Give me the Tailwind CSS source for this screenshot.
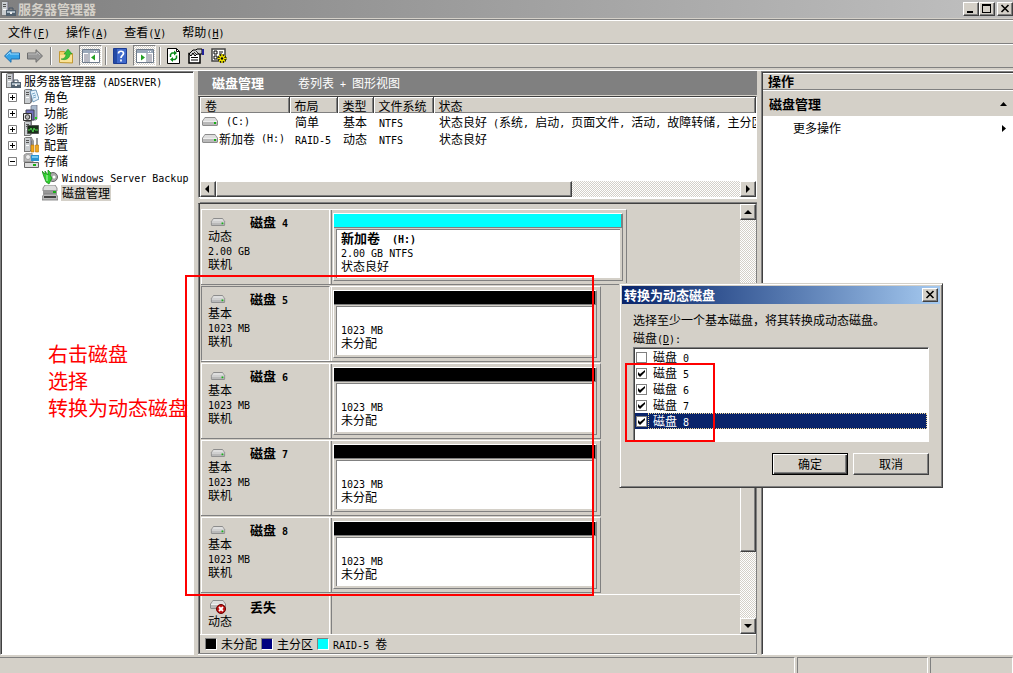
<!DOCTYPE html>
<html lang="zh-CN">
<head>
<meta charset="utf-8">
<title>服务器管理器</title>
<script src="https://cdn.jsdelivr.net/npm/@tailwindcss/browser@4"></script>
</head>
<body class="relative flex h-screen min-h-[673px] flex-col overflow-hidden bg-[#d4d0c8] font-['Noto_Sans_CJK_SC',sans-serif] text-[12px] leading-[16px] text-black [&_span]:font-['DejaVu_Sans_Mono'] [&_span]:text-[10px] [&_span]:leading-none [&_span]:whitespace-pre">
<svg class="hidden" aria-hidden="true">
  <symbol id="disk" viewBox="0 0 16 9"><path d="M3 0h10l3 4v4l-1 1H1L0 8V4z" fill="#8c8c8c"/><path d="M3 1h10l2 3H1z" fill="#dedede"/><path d="M1 4h14v4H1z" fill="#b9b9b9"/><path d="M1 4h14v1H1z" fill="#eee"/><path d="M12 5h2v2h-2z" fill="#18b018"/></symbol>
  <symbol id="tower" viewBox="0 0 16 16"><path d="M1 1l2-1h6v13l-2 2H1z" fill="#777"/><path d="M2 1h5v13H2z" fill="#c9cdd0"/><path d="M3 3h3v1H3zM3 5h3v1H3z" fill="#555"/><path d="M3 8h3v1H3z" fill="#fff"/><path d="M7 1h1v12H7z" fill="#99a"/></symbol>
  <symbol id="server" viewBox="0 0 16 16"><use href="#tower" width="16" height="16"/><path d="M9 9V7h4v2" fill="none" stroke="#456"/><path d="M6 9h10v6H6z" fill="#51616f"/><path d="M7 10h8v2H7z" fill="#a9b8c4"/><path d="M10 11h2v2h-2z" fill="#eee"/></symbol>
  <symbol id="pane" viewBox="0 0 18 14"><path d="M.5 .5h17v13H.5z" fill="#fff" stroke="#6e7b8b"/><path d="M1 1h16v3H1z" fill="#9ba9ba"/><path d="M12 2h1v1h-1zM14 2h1v1h-1z" fill="#fff"/></symbol>
</svg>

<header class="flex h-[18px] shrink-0 items-center justify-between bg-linear-to-r from-[#808080] to-[#c0c0c0]">
  <h1 class="flex items-center gap-[2px] text-[13px] font-bold text-[#d4d0c8]"><svg class="size-4"><use href="#server"/></svg>服务器管理器</h1>
  <div class="flex">
    <button aria-label="最小化" class="h-[14px] w-4 border border-t-white border-l-white border-r-[#404040] border-b-[#404040] bg-[#d4d0c8] shadow-[inset_-1px_-1px_#808080]"><svg viewBox="0 0 14 12" class="h-3 w-[14px]"><path d="M3 8h6v2H3z"/></svg></button>
    <button aria-label="最大化" class="mr-[2px] h-[14px] w-4 border border-t-white border-l-white border-r-[#404040] border-b-[#404040] bg-[#d4d0c8] shadow-[inset_-1px_-1px_#808080]"><svg viewBox="0 0 14 12" class="h-3 w-[14px]"><path d="M2 1h9v9H2zM3 3v6h7V3z" fill-rule="evenodd"/></svg></button>
    <button aria-label="关闭" class="h-[14px] w-4 border border-t-white border-l-white border-r-[#404040] border-b-[#404040] bg-[#d4d0c8] shadow-[inset_-1px_-1px_#808080]"><svg viewBox="0 0 14 12" class="h-3 w-[14px]"><path d="M3.500 2l7 7M10.500 2l-7 7" stroke="#000" stroke-width="1.600"/></svg></button>
  </div>
</header>

<nav class="mt-px flex h-[25px] shrink-0 items-center gap-4 border-t border-b border-[#808080] pl-2 shadow-[inset_0_1px_#fff]">
  <button>文件<span>(<u>F</u>)</span></button><button>操作<span>(<u>A</u>)</span></button><button>查看<span>(<u>V</u>)</span></button><button>帮助<span>(<u>H</u>)</span></button>
</nav>

<div role="toolbar" class="flex h-6 shrink-0 items-center border-b border-[#808080] pl-1 shadow-[inset_0_1px_#fff]">
  <button aria-label="后退"><svg class="block h-[14px] w-4" viewBox="0 0 16 14"><path d="M.5 7L7 .7V4h8.500v6H7v3.300z" fill="#35a3e8" stroke="#1c6cae"/><path d="M2.500 6.500L6 3v2h9" fill="none" stroke="#9bdcff"/></svg></button>
  <button aria-label="前进" class="ml-[7px]"><svg class="block h-[14px] w-4" viewBox="0 0 16 14"><path d="M15.500 7L9 .7V4H.5v6H9v3.300z" fill="#999" stroke="#6c6c6c"/><path d="M1 5h9V3l3 3" fill="none" stroke="#bbb"/></svg></button>
  <div class="ml-[7px] h-[18px] w-[2px] border-l border-[#808080] bg-white"></div>
  <button aria-label="上移" class="ml-[7px]"><svg class="block size-4" viewBox="0 0 16 16"><path d="M.5 14.500v-11h5l1.500 2h6.500V15z" fill="#f2cf6b" stroke="#c39a35"/><path d="M1 7h12v7H1z" fill="#fbe397"/><path d="M2 11c3 0 5-2 5-5H5l4-5 4 5h-2c0 4-4 7-9 5z" fill="#3cc13c" stroke="#168a1d" stroke-width=".5"/></svg></button>
  <button aria-label="显示控制台树" class="ml-1 flex h-[21px] w-[23px] items-center justify-center border border-t-[#808080] border-l-[#808080] border-r-white border-b-white bg-[conic-gradient(#fff_25%,#d4d0c8_0_50%,#fff_0_75%,#d4d0c8_0)] bg-[length:2px_2px]"><svg class="h-[14px] w-[18px]" viewBox="0 0 18 14"><use href="#pane"/><path d="M2 6h4M2 8h4M2 10h4M2 12h4" stroke="#778" /><path d="M7 4v9" stroke="#6e7b8b"/><path d="M13 5.500v6L9 8.500z" fill="#22a022"/></svg></button>
  <div class="ml-[3px] h-[18px] w-[2px] border-l border-[#808080] bg-white"></div>
  <button aria-label="帮助" class="ml-[6px]"><svg class="block h-4 w-[14px]" viewBox="0 0 14 16"><path d="M.5 .5h13v15H.5z" fill="#3f69cb" stroke="#1d3c92"/><path d="M1 1h3v14H1z" fill="#244aa5"/><path d="M5.500 5.500c0-3 5-3 5 0 0 2-2.500 2-2.500 4.500M8 11.500v2" fill="none" stroke="#fff" stroke-width="1.700"/></svg></button>
  <button aria-label="显示操作窗格" class="ml-[6px] flex h-[21px] w-[23px] items-center justify-center border border-t-[#808080] border-l-[#808080] border-r-white border-b-white bg-[conic-gradient(#fff_25%,#d4d0c8_0_50%,#fff_0_75%,#d4d0c8_0)] bg-[length:2px_2px]"><svg class="h-[14px] w-[18px]" viewBox="0 0 18 14"><use href="#pane"/><path d="M12 6h4M12 8h4M12 10h4M12 12h4" stroke="#778"/><path d="M11 4v9" stroke="#6e7b8b"/><path d="M5 5.500v6l4-3z" fill="#22a022"/></svg></button>
  <div class="ml-[3px] h-[18px] w-[2px] border-l border-[#808080] bg-white"></div>
  <button aria-label="刷新" class="ml-[6px]"><svg class="block h-4 w-[13px]" viewBox="0 0 13 16"><path d="M.5 .5h9l3 3v12H.5z" fill="#fff" stroke="#000"/><path d="M9.500 .5v3h3" fill="none" stroke="#000"/><path d="M3.500 9V6.500L5 5h3M9.500 7.500V10L8 11.500H5" fill="none" stroke="#0a8a1a" stroke-width="1.500"/><path d="M7 2.500v5L10 5zM6 9v5L3 11.500z" fill="#0a8a1a"/></svg></button>
  <button aria-label="属性" class="ml-2"><svg class="block h-4 w-[17px]" viewBox="0 0 17 16"><path d="M1 5.500h11v9.500H1z" fill="#fff" stroke="#000" stroke-width="1.500"/><path d="M3 9.500h7M3 12h7" stroke="#000"/><path d="M1 6l4-4h3l1-1h5v5H9L7 8 5 5 3 8z" fill="#ccc" stroke="#000"/><path d="M6 4l3 3M8 3l3 3" stroke="#000" stroke-width=".8"/><path d="M14 1h2v6h-2z" fill="#22229a"/></svg></button>
  <button aria-label="设置" class="ml-[6px]"><svg class="block h-4 w-[17px]" viewBox="0 0 17 16"><path d="M1 1h13v12H1z" fill="#fff" stroke="#444" stroke-width="1.500"/><path d="M3 3h3v3H3zM3 8h3v3H3z" fill="none" stroke="#000"/><path d="M8 4h4M8 6h3" stroke="#000"/><path d="M11 6v9M6.500 10.500h9M8 7.500l6 6M14 7.500l-6 6" stroke="#000" stroke-width="3"/><path d="M11 6v9M6.500 10.500h9M8 7.500l6 6M14 7.500l-6 6" stroke="#eee000" stroke-width="1.600"/><circle cx="11" cy="10.500" r="1.200"/></svg></button>
</div>

<main class="mt-[2px] flex min-h-0 flex-1 gap-1 border-t border-white">
  <aside class="w-[194px] shrink-0 overflow-hidden border border-t-[#808080] border-l-[#808080] border-r-white border-b-white bg-white shadow-[inset_1px_1px_#404040]">
    <ul role="tree" class="pt-px pl-1">
      <li class="flex h-4 items-center gap-[3px]"><svg class="size-4"><use href="#server"/></svg><a href="#">服务器管理器<span> (ADSERVER)</span></a></li>
      <li class="flex h-4 items-center pl-[3px]"><svg class="mr-[6px] size-[9px]" viewBox="0 0 9 9"><path d="M.5 .5h8v8h-8z" fill="#fff" stroke="#808080"/><path d="M2 4.500h5M4.500 2v5" stroke="#000"/></svg><svg class="mr-[5px] size-4" viewBox="0 0 16 16"><use href="#tower"/><path d="M7 2l6-1 3 9-6 3z" fill="#e4f1fb" stroke="#5484a8" stroke-width=".8"/><path d="M9 5l3-1M10 7l3-1M10 9l3-1" stroke="#79a9cb"/></svg><a href="#">角色</a></li>
      <li class="flex h-4 items-center pl-[3px]"><svg class="mr-[6px] size-[9px]" viewBox="0 0 9 9"><path d="M.5 .5h8v8h-8z" fill="#fff" stroke="#808080"/><path d="M2 4.500h5M4.500 2v5" stroke="#000"/></svg><svg class="mr-[5px] size-4" viewBox="0 0 16 16"><path d="M8 1l2-1h4v14l-1 1H8z" fill="#a8b8cc" stroke="#667" stroke-width=".7"/><path d="M3 5h8v10H3z" fill="#7070bc" stroke="#445"/><path d="M.5 8.500h8v7h-8z" fill="#eee" stroke="#333"/><circle cx="4.500" cy="12" r="2.300" fill="#bbb" stroke="#333"/><path d="M12 12h2v2h-2z" fill="#20d020"/></svg><a href="#">功能</a></li>
      <li class="flex h-4 items-center pl-[3px]"><svg class="mr-[6px] size-[9px]" viewBox="0 0 9 9"><path d="M.5 .5h8v8h-8z" fill="#fff" stroke="#808080"/><path d="M2 4.500h5M4.500 2v5" stroke="#000"/></svg><svg class="mr-[5px] size-4" viewBox="0 0 16 16"><use href="#tower"/><path d="M4.500 4.500h11v8h-11z" fill="#193019" stroke="#555"/><path d="M5 9h2l1-2 2 4 1-4 1 2h3" fill="none" stroke="#4fd34f"/></svg><a href="#">诊断</a></li>
      <li class="flex h-4 items-center pl-[3px]"><svg class="mr-[6px] size-[9px]" viewBox="0 0 9 9"><path d="M.5 .5h8v8h-8z" fill="#fff" stroke="#808080"/><path d="M2 4.500h5M4.500 2v5" stroke="#000"/></svg><svg class="mr-[5px] size-4" viewBox="0 0 16 16"><use href="#tower"/><path d="M8 1l2 3v5M14 1v7" fill="none" stroke="#999" stroke-width="2"/><path d="M8 8h3v7H8zM12.500 8h3v7h-3z" fill="#f0a820" stroke="#b87400" stroke-width=".6"/></svg><a href="#">配置</a></li>
      <li class="flex h-4 items-center pl-[3px]"><svg class="mr-[6px] size-[9px]" viewBox="0 0 9 9"><path d="M.5 .5h8v8h-8z" fill="#fff" stroke="#808080"/><path d="M2 4.500h5" stroke="#000"/></svg><svg class="mr-[5px] size-4" viewBox="0 0 16 16"><path d="M1 2l3-2h5l1 9H1z" fill="#bbb" stroke="#777" stroke-width=".7"/><circle cx="5" cy="4" r="2.500" fill="#eee" stroke="#888" stroke-width=".7"/><path d="M8 2h8v6H8z" fill="#2a94d0"/><path d="M9 3h6v2H9z" fill="#76caf2"/><path d="M1.500 9.500h14v5h-14z" fill="#ddd" stroke="#666"/><path d="M10 11h3v2h-3z" fill="#18b018"/></svg><a href="#">存储</a></li>
      <li class="flex h-4 items-center pl-[37px]"><svg class="mr-1 size-4" viewBox="0 0 16 16"><circle cx="11" cy="8" r="4.500" fill="#aaa" stroke="#666"/><circle cx="12" cy="8" r="1.500" fill="#fff"/><path d="M0 2l3 3V2l3 4V1l3 3-1 2 2 3-3 6-3-2-2-5z" fill="#2fd12f" stroke="#178217" stroke-width=".7"/><path d="M5 6v6" stroke="#bff5bf"/></svg><a href="#"><span>Windows Server Backup</span></a></li>
      <li class="flex h-4 items-center pl-[37px]"><svg class="mr-[3px] size-4" viewBox="0 0 16 16"><path d="M3 0h10l2 3v3H1V3z" fill="#ddd" stroke="#777" stroke-width=".8"/><path d="M1 5h14v4H1z" fill="#999"/><path d="M11 6h3v2h-3z" fill="#18b018"/><path d="M2 9h12l2 3v3H0v-3z" fill="#bbb" stroke="#777" stroke-width=".8"/><path d="M2 12h12" stroke="#444" stroke-width="2"/></svg><a href="#" class="bg-[#d4d0c8] px-px">磁盘管理</a></li>
    </ul>
  </aside>

  <section class="flex min-w-0 flex-1 flex-col overflow-hidden border-b border-white">
    <div class="flex h-6 shrink-0 items-center bg-[#808080] pl-[14px] text-white"><h2 class="text-[13px] font-bold">磁盘管理</h2><p class="pl-[34px]">卷列表<span> + </span>图形视图</p></div>
    <div class="mt-px flex h-[102px] shrink-0 flex-col border border-t-[#404040] border-l-[#808080] border-r-white border-b-white bg-white pl-px shadow-[inset_1px_0_#404040]">
      <div class="min-h-0 flex-1 overflow-hidden">
        <table class="w-full table-fixed border-collapse leading-[17px] whitespace-nowrap">
          <thead class="text-left"><tr class="h-4 bg-[#d4d0c8] shadow-[inset_0_1px_#fff,inset_0_-1px_#808080] [&>th]:border-r [&>th]:border-[#404040] [&>th]:p-0 [&>th]:pl-[5px] [&>th]:font-normal [&>th]:leading-[15px] [&>th]:shadow-[inset_1px_1px_#fff,inset_-1px_-1px_#808080]"><th class="w-[89px]">卷</th><th class="w-12">布局</th><th class="w-9">类型</th><th class="w-[60px]">文件系统</th><th>状态</th></tr></thead>
          <tbody class="[&_td]:overflow-hidden [&_td]:p-0 [&_td]:pl-[6px]">
            <tr><td><div class="-ml-1 flex h-[17px] items-center"><svg class="mr-[2px] h-[9px] w-4"><use href="#disk"/></svg><span> (C:)</span></div></td><td>简单</td><td>基本</td><td><span>NTFS</span></td><td>状态良好<span> (</span>系统<span>, </span>启动<span>, </span>页面文件<span>, </span>活动<span>, </span>故障转储<span>, </span>主分区<span>)</span></td></tr>
            <tr><td><div class="-ml-1 flex h-[17px] items-center"><svg class="mr-px h-[9px] w-4"><use href="#disk"/></svg>新加卷<span> (H:)</span></div></td><td><span>RAID-5</span></td><td>动态</td><td><span>NTFS</span></td><td>状态良好</td></tr>
          </tbody>
        </table>
      </div>
      <div class="flex h-4 shrink-0 bg-[conic-gradient(#fff_25%,#d4d0c8_0_50%,#fff_0_75%,#d4d0c8_0)] bg-[length:2px_2px]">
        <button aria-label="向左滚动" class="w-4 border border-t-white border-l-white border-r-[#404040] border-b-[#404040] bg-[#d4d0c8] shadow-[inset_-1px_-1px_#808080]"><svg viewBox="0 0 14 14" class="size-[14px]"><path d="M8 3v8L4 7z"/></svg></button>
        <div class="flex-1"><div class="h-4 w-[68%] border border-t-white border-l-white border-r-[#404040] border-b-[#404040] bg-[#d4d0c8] shadow-[inset_-1px_-1px_#808080]"></div></div>
        <button aria-label="向右滚动" class="w-4 border border-t-white border-l-white border-r-[#404040] border-b-[#404040] bg-[#d4d0c8] shadow-[inset_-1px_-1px_#808080]"><svg viewBox="0 0 14 14" class="size-[14px]"><path d="M5 3v8l4-4z"/></svg></button>
      </div>
    </div>
    <div class="ml-[2px] h-[5px] shrink-0 border-t border-b border-t-white border-b-[#808080]"></div>
    <div class="flex min-h-0 flex-1 flex-col border border-t-[#404040] border-l-[#808080] border-r-[#808080] border-b-[#808080] pl-px shadow-[inset_1px_0_#404040]">
      <div class="flex min-h-0 flex-1">
        <div class="flex min-w-0 flex-1 flex-col gap-px overflow-hidden pt-[5px] pl-px leading-[14px]">
          <article class="flex h-[76px] w-[426px] shrink-0 border-t border-r border-b border-t-white border-r-[#808080] border-b-[#808080]">
            <div class="flex w-[129px] border-l border-r border-white pt-[5px] pl-[6px]"><div class="w-[42px] shrink-0"><svg class="mt-[3px] mb-[3px] ml-[2px] h-[8px] w-4"><use href="#disk"/></svg><p>动态</p><p><span>2.00 GB</span></p><p>联机</p></div><h3 class="text-[13px] font-bold">磁盘<span> 4</span></h3></div>
            <div class="ml-px flex-1 border-l border-[#808080] py-[3px] pr-[3px] pl-px"><div class="flex h-full flex-col border border-t-white border-l-white border-r-[#808080] border-b-[#808080]"><div class="h-[14px] border-r border-b border-[#808080] bg-[#00ffff]"></div><div class="mx-[2px] mt-px mb-[2px] flex-1 border-t border-l border-[#808080] bg-white pt-px pl-[4px]"><h4 class="text-[13px] font-bold">新加卷<span>  (H:)</span></h4><p><span>2.00 GB NTFS</span></p><p>状态良好</p></div></div></div>
          </article>
          <article class="flex h-[76px] w-[400px] shrink-0 border-t border-r border-b border-t-white border-r-[#808080] border-b-[#808080]">
            <div class="-mt-px flex w-[129px] border border-t-[#808080] border-l-[#808080] border-r-white border-b-white pt-[5px] pl-[6px]"><div class="w-[42px] shrink-0"><svg class="mt-[3px] mb-[3px] ml-[2px] h-[8px] w-4"><use href="#disk"/></svg><p>基本</p><p><span>1023 MB</span></p><p>联机</p></div><h3 class="text-[13px] font-bold">磁盘<span> 5</span></h3></div>
            <div class="ml-px flex-1 border-l border-white py-[3px] pr-[3px] pl-px"><div class="flex h-full flex-col border border-t-white border-l-white border-r-[#808080] border-b-[#808080]"><div class="h-[14px] border-r border-b border-[#808080] bg-black"></div><div class="mx-[2px] mt-px mb-[2px] flex-1 border-t border-l border-[#808080] bg-white pt-[15px] pl-[4px]"><p><span>1023 MB</span></p><p>未分配</p></div></div></div>
          </article>
          <article class="flex h-[76px] w-[400px] shrink-0 border-t border-r border-b border-t-white border-r-[#808080] border-b-[#808080]">
            <div class="flex w-[129px] border-l border-r border-white pt-[5px] pl-[6px]"><div class="w-[42px] shrink-0"><svg class="mt-[3px] mb-[3px] ml-[2px] h-[8px] w-4"><use href="#disk"/></svg><p>基本</p><p><span>1023 MB</span></p><p>联机</p></div><h3 class="text-[13px] font-bold">磁盘<span> 6</span></h3></div>
            <div class="ml-px flex-1 border-l border-[#808080] py-[3px] pr-[3px] pl-px"><div class="flex h-full flex-col border border-t-white border-l-white border-r-[#808080] border-b-[#808080]"><div class="h-[14px] border-r border-b border-[#808080] bg-black"></div><div class="mx-[2px] mt-px mb-[2px] flex-1 border-t border-l border-[#808080] bg-white pt-[15px] pl-[4px]"><p><span>1023 MB</span></p><p>未分配</p></div></div></div>
          </article>
          <article class="flex h-[76px] w-[400px] shrink-0 border-t border-r border-b border-t-white border-r-[#808080] border-b-[#808080]">
            <div class="flex w-[129px] border-l border-r border-white pt-[5px] pl-[6px]"><div class="w-[42px] shrink-0"><svg class="mt-[3px] mb-[3px] ml-[2px] h-[8px] w-4"><use href="#disk"/></svg><p>基本</p><p><span>1023 MB</span></p><p>联机</p></div><h3 class="text-[13px] font-bold">磁盘<span> 7</span></h3></div>
            <div class="ml-px flex-1 border-l border-[#808080] py-[3px] pr-[3px] pl-px"><div class="flex h-full flex-col border border-t-white border-l-white border-r-[#808080] border-b-[#808080]"><div class="h-[14px] border-r border-b border-[#808080] bg-black"></div><div class="mx-[2px] mt-px mb-[2px] flex-1 border-t border-l border-[#808080] bg-white pt-[15px] pl-[4px]"><p><span>1023 MB</span></p><p>未分配</p></div></div></div>
          </article>
          <article class="flex h-[76px] w-[400px] shrink-0 border-t border-r border-b border-t-white border-r-[#808080] border-b-[#808080]">
            <div class="flex w-[129px] border-l border-r border-white pt-[5px] pl-[6px]"><div class="w-[42px] shrink-0"><svg class="mt-[3px] mb-[3px] ml-[2px] h-[8px] w-4"><use href="#disk"/></svg><p>基本</p><p><span>1023 MB</span></p><p>联机</p></div><h3 class="text-[13px] font-bold">磁盘<span> 8</span></h3></div>
            <div class="ml-px flex-1 border-l border-[#808080] py-[3px] pr-[3px] pl-px"><div class="flex h-full flex-col border border-t-white border-l-white border-r-[#808080] border-b-[#808080]"><div class="h-[14px] border-r border-b border-[#808080] bg-black"></div><div class="mx-[2px] mt-px mb-[2px] flex-1 border-t border-l border-[#808080] bg-white pt-[15px] pl-[4px]"><p><span>1023 MB</span></p><p>未分配</p></div></div></div>
          </article>
          <article class="flex min-h-0 flex-1 border-t border-white">
            <div class="flex w-[129px] border-l border-r border-white pt-[5px] pl-[6px]"><div class="w-[42px] shrink-0"><svg class="ml-[2px] h-[14px] w-[17px]" viewBox="0 0 17 14"><use href="#disk" width="16" height="9"/><circle cx="11" cy="9" r="4.500" fill="#c01010" stroke="#600"/><path d="M9 7l4 4M13 7l-4 4" stroke="#fff" stroke-width="1.800"/></svg><p>动态</p></div><h3 class="text-[13px] font-bold">丢失</h3></div>
            <div class="ml-px flex-1 border-l border-[#808080]"></div>
          </article>
        </div>
        <div class="flex w-4 shrink-0 flex-col bg-[conic-gradient(#fff_25%,#d4d0c8_0_50%,#fff_0_75%,#d4d0c8_0)] bg-[length:2px_2px]">
          <button aria-label="向上滚动" class="h-4 border border-t-white border-l-white border-r-[#404040] border-b-[#404040] bg-[#d4d0c8] shadow-[inset_-1px_-1px_#808080]"><svg viewBox="0 0 14 14" class="size-[14px]"><path d="M3 9h8L7 5z"/></svg></button>
          <div class="flex flex-1 flex-col justify-end pb-[66px]"><div class="h-[60%] border border-t-white border-l-white border-r-[#404040] border-b-[#404040] bg-[#d4d0c8] shadow-[inset_-1px_-1px_#808080]"></div></div>
          <button aria-label="向下滚动" class="h-4 border border-t-white border-l-white border-r-[#404040] border-b-[#404040] bg-[#d4d0c8] shadow-[inset_-1px_-1px_#808080]"><svg viewBox="0 0 14 14" class="size-[14px]"><path d="M3 5h8L7 9z"/></svg></button>
        </div>
      </div>
      <div class="flex h-[19px] shrink-0 items-center gap-1 border-t border-white pl-[5px]">
        <div class="size-3 border border-t-[#808080] border-l-[#808080] border-r-white border-b-white bg-black"></div><p>未分配</p>
        <div class="size-3 border border-t-[#808080] border-l-[#808080] border-r-white border-b-white bg-[#000080]"></div><p>主分区</p>
        <div class="size-3 border border-t-[#808080] border-l-[#808080] border-r-white border-b-white bg-[#00ffff]"></div><p><span>RAID-5 </span>卷</p>
      </div>
    </div>
  </section>

  <aside class="flex w-[252px] shrink-0 flex-col border-t border-l border-b border-t-[#808080] border-l-[#808080] border-b-white bg-white pt-px pl-px shadow-[inset_1px_1px_#404040]">
    <h2 class="flex h-[17px] items-center border-b border-[#808080] bg-[#d4d0c8] pl-[5px] text-[13px] font-bold shadow-[inset_0_1px_#fff]">操作</h2>
    <button class="flex h-[26px] items-center justify-between border-t border-white bg-[#d4d0c8] pr-[6px] pl-[6px] text-[13px] font-bold">磁盘管理<svg class="h-1 w-[7px]" viewBox="0 0 7 4"><path d="M0 4h7L3.500 0z"/></svg></button>
    <button class="flex h-6 items-center justify-between pr-[7px] pl-[30px]">更多操作<svg class="h-[7px] w-1" viewBox="0 0 4 7"><path d="M0 0v7l4-3.500z"/></svg></button>
  </aside>
</main>

<footer class="mt-px flex h-[17px] shrink-0 gap-[2px] border-t border-[#d4d0c8]">
  <div class="flex-1 border-t border-r border-t-[#808080] border-r-white"></div>
  <div class="w-[131px] border-t border-l border-r border-t-[#808080] border-l-[#808080] border-r-white"></div>
  <div class="w-[83px] border-t border-l border-r border-t-[#808080] border-l-[#808080] border-r-white"></div>
</footer>

<form role="dialog" aria-label="转换为动态磁盘" class="absolute top-[283px] left-[619px] w-[324px] border border-t-[#d4d0c8] border-l-[#d4d0c8] border-r-[#404040] border-b-[#404040] bg-[#d4d0c8] p-[2px] pb-[12px] shadow-[inset_1px_1px_#fff,inset_-1px_-1px_#808080]">
  <div class="flex h-[18px] items-center justify-between bg-linear-to-r from-[#0a246a] to-[#a6caf0] pr-[2px] pl-[2px] text-[13px] font-bold text-white"><h2>转换为动态磁盘</h2><button type="button" aria-label="关闭" class="h-[14px] w-4 border border-t-white border-l-white border-r-[#404040] border-b-[#404040] bg-[#d4d0c8] shadow-[inset_-1px_-1px_#808080]"><svg viewBox="0 0 14 12" class="h-3 w-[14px]"><path d="M3.500 2l7 7M10.500 2l-7 7" stroke="#000" stroke-width="1.600"/></svg></button></div>
  <div class="px-[11px] pt-[7px]">
    <p class="leading-[18px]">选择至少一个基本磁盘，将其转换成动态磁盘。</p>
    <p id="disks-label" class="leading-[18px]">磁盘<span>(<u>D</u>):</span></p>
    <div role="group" aria-labelledby="disks-label" class="h-[95px] border border-t-[#808080] border-l-[#808080] border-r-white border-b-white bg-white pt-px pr-px pl-px shadow-[inset_1px_1px_#404040]">
      <label class="relative flex h-4 items-center"><input type="checkbox" class="peer mx-px size-[11px] appearance-none border border-[#808080] bg-white"><svg class="absolute left-[3px] hidden size-[7px] peer-checked:block" viewBox="0 0 7 7"><path d="M0 2v3l2 2 5-5V0L2 4z"/></svg><div class="flex-1 border border-transparent pl-1 leading-[14px]">磁盘<span> 0</span></div></label>
      <label class="relative flex h-4 items-center"><input type="checkbox" checked class="peer mx-px size-[11px] appearance-none border border-[#808080] bg-white"><svg class="absolute left-[3px] hidden size-[7px] peer-checked:block" viewBox="0 0 7 7"><path d="M0 2v3l2 2 5-5V0L2 4z"/></svg><div class="flex-1 border border-transparent pl-1 leading-[14px]">磁盘<span> 5</span></div></label>
      <label class="relative flex h-4 items-center"><input type="checkbox" checked class="peer mx-px size-[11px] appearance-none border border-[#808080] bg-white"><svg class="absolute left-[3px] hidden size-[7px] peer-checked:block" viewBox="0 0 7 7"><path d="M0 2v3l2 2 5-5V0L2 4z"/></svg><div class="flex-1 border border-transparent pl-1 leading-[14px]">磁盘<span> 6</span></div></label>
      <label class="relative flex h-4 items-center"><input type="checkbox" checked class="peer mx-px size-[11px] appearance-none border border-[#808080] bg-white"><svg class="absolute left-[3px] hidden size-[7px] peer-checked:block" viewBox="0 0 7 7"><path d="M0 2v3l2 2 5-5V0L2 4z"/></svg><div class="flex-1 border border-transparent pl-1 leading-[14px]">磁盘<span> 7</span></div></label>
      <label class="relative flex h-4 items-center bg-[#0a246a] text-white"><input type="checkbox" checked class="peer mx-px size-[11px] appearance-none border border-[#808080] bg-white"><svg class="absolute left-[3px] hidden size-[7px] text-black peer-checked:block" viewBox="0 0 7 7"><path d="M0 2v3l2 2 5-5V0L2 4z"/></svg><div class="flex-1 border border-dotted border-[#f5db95] pl-1 leading-[14px]">磁盘<span> 8</span></div></label>
    </div>
    <div class="mt-[11px] flex justify-end gap-[5px]">
      <button type="button" class="h-[22px] w-[76px] border border-black shadow-[inset_1px_1px_#fff,inset_-1px_-1px_#404040,inset_-2px_-2px_#808080]">确定</button>
      <button type="button" class="h-[22px] w-[76px] border border-t-white border-l-white border-r-[#404040] border-b-[#404040] shadow-[inset_-1px_-1px_#808080]">取消</button>
    </div>
  </div>
</form>

<p class="absolute top-[340px] left-[48px] text-[20px] leading-[27px] whitespace-nowrap text-[#ff0000]">右击磁盘<br>选择<br>转换为动态磁盘</p>
<div class="pointer-events-none absolute top-[275px] left-[185px] h-[321px] w-[409px] border-2 border-[#ff0000]"></div>
<div class="pointer-events-none absolute top-[363px] left-[625px] h-[79px] w-[90px] border-2 border-[#ff0000]"></div>
</body>
</html>
